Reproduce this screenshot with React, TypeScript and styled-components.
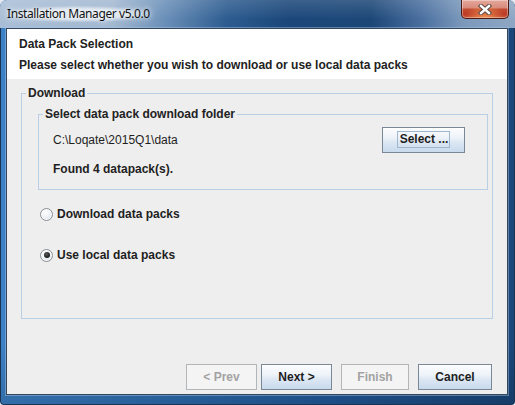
import React from "react";
import styled, { createGlobalStyle } from "styled-components";

const Global = createGlobalStyle`
  html, body { margin: 0; padding: 0; background: #e4eaf0; }
  body {
    width: 515px; height: 405px; overflow: hidden;
    font-family: "Liberation Sans", Arial, sans-serif;
  }
  * { box-sizing: border-box; }
`;

const Window = styled.div`
  width: 515px;
  height: 405px;
  display: flex;
  flex-direction: column;
  border-radius: 7px 7px 4px 4px;
  overflow: hidden;
  background:
    linear-gradient(180deg, rgba(255,255,255,0) 85%, rgba(0,0,0,0.15) 100%),
    linear-gradient(90deg, #3c80c6 0%, #2d6caf 35%, #22599a 65%, #1a4679 100%);
  box-shadow: inset 0 0 0 1px #183452;
`;

const TitleBar = styled.div`
  height: 28px;
  flex: none;
  display: flex;
  align-items: flex-start;
  padding: 0 6px 0 7px;
  background:
    linear-gradient(180deg, rgba(255,255,255,0.14), rgba(255,255,255,0) 70%),
    linear-gradient(90deg, #a9bed6 0%, #a2b8d1 22%, #6a8fb8 32%, #2d5c90 44%, #1b477a 56%, #1c4777 72%, #4b70a0 82%, #7c99bb 90%, #8ea7c4 100%);
`;

const Title = styled.span`
  margin-top: 6px;
  font-family: "Noto Sans", "Open Sans", sans-serif;
  font-size: 12px;
  line-height: 16px;
  color: #111;
  letter-spacing: -0.4px;
  border-radius: 10px;
  background: radial-gradient(ellipse at center, rgba(228,235,243,0.85) 45%, rgba(228,235,243,0) 75%);
  text-shadow: 0 0 5px #fff, 0 0 9px rgba(255,255,255,0.9);
`;

const CloseButton = styled.div`
  margin-left: auto;
  width: 48px;
  height: 19px;
  display: flex;
  align-items: center;
  justify-content: center;
  border: 1px solid #4b1c16;
  border-top: none;
  border-radius: 0 0 5px 5px;
  background:
    radial-gradient(ellipse at 50% 100%, rgba(255,170,90,0.7) 0%, rgba(255,120,60,0) 60%),
    linear-gradient(180deg, #e5a89c 0%, #d88c7e 42%, #c24a31 52%, #bd3b26 80%, #c9553a 100%);
  box-shadow: inset 0 0 0 1px rgba(255,255,255,0.35);
`;

const Frame = styled.div`
  flex: 1;
  display: flex;
  padding: 0 7px 10px 6px;
`;

const Client = styled.div`
  flex: 1;
  display: flex;
  flex-direction: column;
  border: 1px solid #34465c;
  background: #eeeeee;
  box-shadow: 0 0 0 1px rgba(170,200,230,0.45);
`;

const Header = styled.div`
  height: 50px;
  flex: none;
  background: #ffffff;
  padding: 8px 12px 0;
  display: flex;
  flex-direction: column;
  gap: 7px;
`;

const HeaderText = styled.div`
  font-size: 12px;
  line-height: 14px;
  font-weight: bold;
  color: #222;
`;

const Body = styled.div`
  flex: 1;
  display: flex;
  flex-direction: column;
  padding: 7px 14px 4px 14px;
`;

const Group = styled.fieldset<{ $grow?: boolean }>`
  margin: 0;
  padding: 0;
  min-width: 0;
  border: 1px solid #b9cfe5;
  flex: ${(p) => (p.$grow ? 1 : "none")};
  display: flex;
  flex-direction: column;
`;

const Legend = styled.legend`
  margin-left: 4px;
  padding: 0 2px;
  font-size: 12px;
  line-height: 14px;
  font-weight: bold;
  color: #222;
`;

const GroupContent = styled.div<{ $pad: string }>`
  display: flex;
  flex-direction: column;
  padding: ${(p) => p.$pad};
`;

const FolderRow = styled.div`
  display: flex;
  align-items: center;
  justify-content: space-between;
  height: 27px;
`;

const Label = styled.span<{ $bold?: boolean }>`
  font-size: 12px;
  line-height: 14px;
  font-weight: ${(p) => (p.$bold ? "bold" : "normal")};
  color: #1e1e1e;
`;

const FoundLine = styled(Label)`
  margin-top: 9px;
`;

const RadioList = styled.div`
  display: flex;
  flex-direction: column;
  gap: 23px;
  padding: 15px 0 0 2px;
`;

const RadioRow = styled.label`
  display: flex;
  align-items: center;
  gap: 4px;
  height: 18px;
  font-size: 12px;
  font-weight: bold;
  color: #1e1e1e;
`;

const RadioCircle = styled.span<{ $checked?: boolean }>`
  width: 13px;
  height: 13px;
  border-radius: 50%;
  border: 1px solid #8b8e93;
  background: radial-gradient(circle at 40% 35%, #ffffff 0%, #eef2f7 45%, #cdd6e0 100%);
  display: flex;
  align-items: center;
  justify-content: center;
  box-shadow: inset 0 0 0 1px rgba(255,255,255,0.8);
  &::after {
    content: "";
    display: ${(p) => (p.$checked ? "block" : "none")};
    width: 6px;
    height: 6px;
    border-radius: 50%;
    background: radial-gradient(circle at 40% 35%, #5a5a5a 0%, #1a1a1a 70%);
  }
`;

const ButtonRow = styled.div`
  margin-top: 45px;
  display: flex;
  justify-content: flex-end;
  padding-right: 1px;
`;

const Button = styled.div<{ $w: number; $gap?: number; $disabled?: boolean }>`
  width: ${(p) => p.$w}px;
  height: 26px;
  margin-left: ${(p) => p.$gap ?? 0}px;
  flex: none;
  display: flex;
  align-items: center;
  justify-content: center;
  font-size: 12px;
  font-weight: bold;
  color: ${(p) => (p.$disabled ? "#a3a3a3" : "#1e1e1e")};
  border: 1px solid ${(p) => (p.$disabled ? "#b3b6b9" : "#7a8797")};
  background: ${(p) =>
    p.$disabled
      ? "#f4f4f4"
      : "linear-gradient(180deg, #fbfcfe 0%, #eef3f9 40%, #dce7f3 60%, #c8daed 100%)"};
  box-shadow: ${(p) => (p.$disabled ? "none" : "inset 0 1px 0 #ffffff")};
`;

const FocusRing = styled.span`
  border: 1px solid #9fb6cf;
  padding: 1px 1px 1px 2px;
  line-height: 13px;
`;

function CloseX() {
  return (
    <svg width="14" height="11" viewBox="0 0 14 11">
      <path d="M3 2 L11 9 M11 2 L3 9" stroke="#5a4a48" strokeWidth="4.4" strokeLinecap="square" />
      <path d="M3 2 L11 9 M11 2 L3 9" stroke="#ffffff" strokeWidth="2.4" strokeLinecap="square" />
    </svg>
  );
}

export default function App() {
  return (
    <>
      <Global />
      <Window>
        <TitleBar>
          <Title>Installation Manager v5.0.0</Title>
          <CloseButton>
            <CloseX />
          </CloseButton>
        </TitleBar>
        <Frame>
          <Client>
            <Header>
              <HeaderText>Data Pack Selection</HeaderText>
              <HeaderText>Please select whether you wish to download or use local data packs</HeaderText>
            </Header>
            <Body>
              <Group $grow>
                <Legend>Download</Legend>
                <GroupContent $pad="7px 4px 0 16px">
                  <Group>
                    <Legend>Select data pack download folder</Legend>
                    <GroupContent $pad="5px 22px 13px 14px">
                      <FolderRow>
                        <Label>C:\Loqate\2015Q1\data</Label>
                        <Button $w={83}>
                          <FocusRing>Select ...</FocusRing>
                        </Button>
                      </FolderRow>
                      <FoundLine $bold>Found 4 datapack(s).</FoundLine>
                    </GroupContent>
                  </Group>
                  <RadioList>
                    <RadioRow>
                      <RadioCircle />
                      Download data packs
                    </RadioRow>
                    <RadioRow>
                      <RadioCircle $checked />
                      Use local data packs
                    </RadioRow>
                  </RadioList>
                </GroupContent>
              </Group>
              <ButtonRow>
                <Button $w={71} $disabled>&lt; Prev</Button>
                <Button $w={71} $gap={4}>Next &gt;</Button>
                <Button $w={68} $gap={9} $disabled>Finish</Button>
                <Button $w={74} $gap={9}>Cancel</Button>
              </ButtonRow>
            </Body>
          </Client>
        </Frame>
      </Window>
    </>
  );
}
